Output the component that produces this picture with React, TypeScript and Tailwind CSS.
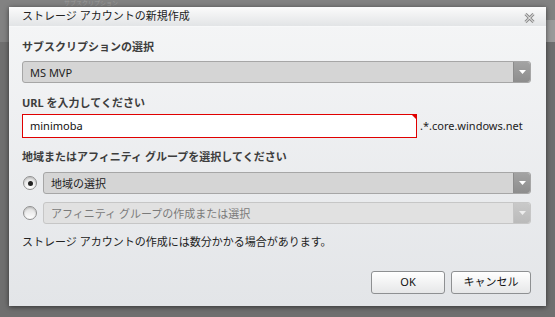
import React from 'react';

const font = { fontFamily: '"Noto Sans", "Noto Sans CJK JP", sans-serif' };

function Arrow({ disabled }: { disabled?: boolean }) {
  return (
    <div
      className={
        'flex h-full w-[17px] items-center justify-center rounded-r-[3px] border-l ' +
        (disabled
          ? 'border-[#c4c4c4] bg-gradient-to-b from-[#c9c9c9] to-[#bababa]'
          : 'border-[#8c8c8c] bg-gradient-to-b from-[#a3a3a3] to-[#8d8d8d]')
      }
    >
      <svg width="7" height="4" viewBox="0 0 7 4">
        <path d="M0 0h7L3.5 4z" fill={disabled ? '#eeeeee' : '#ffffff'} />
      </svg>
    </div>
  );
}

function Select({ label, disabled, className }: { label: string; disabled?: boolean; className?: string }) {
  return (
    <div
      className={
        'flex h-[22px] items-center rounded-[3px] border ' +
        (disabled ? 'border-[#c6c6c6] bg-[#e1e1e1] text-[#7a7a7a] ' : 'border-[#a6a6a6] bg-[#d5d5d5] text-[#222] ') +
        (className ?? '')
      }
    >
      <span className="flex-1 pl-[7px] text-[11px] leading-none">{label}</span>
      <Arrow disabled={disabled} />
    </div>
  );
}

function Radio({ checked }: { checked?: boolean }) {
  return (
    <div className="flex h-[14px] w-[14px] shrink-0 items-center justify-center rounded-full border border-[#8f8f8f] bg-gradient-to-b from-[#dedede] to-[#ffffff] shadow-[inset_0_1px_2px_rgba(0,0,0,0.18)]">
      {checked && <div className="h-[5px] w-[5px] rounded-full bg-[#222]" />}
    </div>
  );
}

export default function App() {
  return (
    <div className="relative h-[317px] w-[555px] overflow-hidden bg-[#6f6f6f]" style={font}>
      {/* dimmed page behind the dialog */}
      <div className="absolute left-0 top-0 h-[42px] w-[555px] bg-[#828282]" />
      <div className="absolute left-[546px] top-[20px] h-[22px] w-[9px] bg-[#9a9a9a]" />
      <div className="absolute left-[64px] top-0 text-[6px] leading-[6px] text-[#9a9a9a]">サブスクリプション</div>

      <div className="relative pl-[9px] pt-[7px]">
        <div className="flex h-[299px] w-[537px] flex-col bg-gradient-to-b from-[#f5f6f7] to-[#e3e5e8] shadow-[0_1px_5px_rgba(0,0,0,0.55)]">
          {/* title bar */}
          <div className="flex h-[20px] items-center justify-between border-b border-[#f7f8f9] bg-gradient-to-b from-[#fbfbfb] to-[#e2e4e6] pl-[13px] pr-[11px]">
            <span className="text-[11px] text-[#222]">ストレージ アカウントの新規作成</span>
            <svg className="mt-[3px]" width="11" height="10" viewBox="0 0 11 10">
              <path d="M1.5 1L9.5 9M9.5 1L1.5 9" stroke="#8a8a8a" strokeWidth="3" />
              <path d="M1.5 1L9.5 9M9.5 1L1.5 9" stroke="#ffffff" strokeWidth="1" />
            </svg>
          </div>

          <div className="flex flex-1 flex-col pl-[13px] pr-[15px]">
            <div className="mt-[12px] text-[11px] font-bold leading-[16px] text-[#3d3d3d]">サブスクリプションの選択</div>
            <Select label="MS MVP" className="mt-[6px]" />

            <div className="mt-[12px] text-[11px] font-bold leading-[16px] text-[#3d3d3d]">URL を入力してください</div>
            <div className="mt-[3px] flex items-center">
              <div className="relative flex h-[24px] w-[395px] items-center border border-[#e00000] bg-white pl-[7px]">
                <span className="text-[11px] text-[#111]">minimoba</span>
                <svg className="absolute right-[-1px] top-[-1px]" width="6" height="6" viewBox="0 0 6 6">
                  <path d="M0 0h6v6z" fill="#e00000" />
                </svg>
              </div>
              <span className="ml-[3px] text-[11px] text-[#222]">.*.core.windows.net</span>
            </div>

            <div className="mt-[11px] text-[11px] font-bold leading-[16px] text-[#3d3d3d]">地域またはアフィニティ グループを選択してください</div>
            <div className="mt-[7px] flex items-center gap-[6px] pl-[1px]">
              <Radio checked />
              <Select label="地域の選択" className="flex-1" />
            </div>
            <div className="mt-[8px] flex items-center gap-[6px] pl-[1px]">
              <Radio />
              <Select label="アフィニティ グループの作成または選択" disabled className="flex-1" />
            </div>

            <div className="mt-[10px] text-[11px] leading-[16px] text-[#222]">ストレージ アカウントの作成には数分かかる場合があります。</div>

            <div className="mt-[21px] flex justify-end gap-[6px]">
              <button className="h-[23px] w-[74px] rounded-[3px] border border-[#8e9092] bg-gradient-to-b from-[#ffffff] to-[#e6e7e8] text-[11px] text-[#111]">OK</button>
              <button className="h-[23px] w-[80px] rounded-[3px] border border-[#8e9092] bg-gradient-to-b from-[#ffffff] to-[#e6e7e8] text-[11px] text-[#111]">キャンセル</button>
            </div>
          </div>
        </div>
      </div>
    </div>
  );
}
